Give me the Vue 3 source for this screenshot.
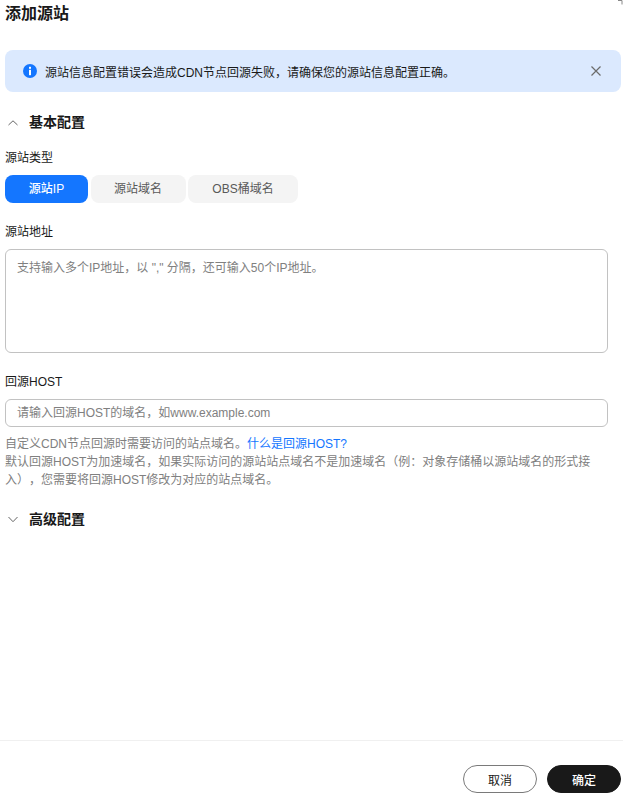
<script setup>
const types = [
  { label: '源站IP', cls: 'seg seg-ip active' },
  { label: '源站域名', cls: 'seg seg-domain' },
  { label: 'OBS桶域名', cls: 'seg seg-obs' },
]
</script>

<template>
  <div class="dialog">
    <svg class="corner" width="6" height="6" viewBox="0 0 6 6"><path d="M1 0.5 5 0.5 5 4.5" fill="none" stroke="#888" stroke-width="1"/></svg>
    <main class="body">
      <h1 class="title">添加源站</h1>
      <div class="alert">
        <svg class="info" width="14" height="14" viewBox="0 0 14 14">
          <circle cx="7" cy="7" r="7" fill="#1476ff"/>
          <rect x="6" y="2.8" width="2" height="2" fill="#fff"/>
          <rect x="6" y="5.8" width="2" height="5.4" fill="#fff"/>
        </svg>
        <span class="alert-text">源站信息配置错误会造成CDN节点回源失败，请确保您的源站信息配置正确。</span>
        <svg class="close" width="12" height="12" viewBox="0 0 12 12"><path d="M1.5 1.5 10.5 10.5M10.5 1.5 1.5 10.5" stroke="#6b6b6b" stroke-width="1.2" fill="none"/></svg>
      </div>

      <div class="section-head first">
        <svg class="chev" width="12" height="12" viewBox="0 0 12 12"><path d="M1.5 9 6 4.8 10.5 9" fill="none" stroke="#666" stroke-width="1"/></svg>
        <span>基本配置</span>
      </div>

      <div class="label l-type">源站类型</div>
      <div class="segs">
        <div v-for="t in types" :key="t.label" :class="t.cls">{{ t.label }}</div>
      </div>

      <div class="label l-addr">源站地址</div>
      <div class="textarea">支持输入多个IP地址，以 "," 分隔，还可输入50个IP地址。</div>

      <div class="label l-host">回源HOST</div>
      <div class="input">请输入回源HOST的域名，如www.example.com</div>
      <p class="help">自定义CDN节点回源时需要访问的站点域名。<a class="link">什么是回源HOST?</a><br>默认回源HOST为加速域名，如果实际访问的源站站点域名不是加速域名（例：对象存储桶以源站域名的形式接入），您需要将回源HOST修改为对应的站点域名。</p>

      <div class="section-head second">
        <svg class="chev" width="12" height="12" viewBox="0 0 12 12"><path d="M1.5 4 6 8.7 10.5 4" fill="none" stroke="#666" stroke-width="1"/></svg>
        <span>高级配置</span>
      </div>
    </main>
    <footer class="footer">
      <button class="btn cancel">取消</button>
      <button class="btn ok">确定</button>
    </footer>
  </div>
</template>

<style>
html, body { margin: 0; background: #fff; }
</style>

<style scoped>
.dialog {
  position: relative;
  width: 623px;
  height: 796px;
  display: flex;
  flex-direction: column;
  overflow: hidden;
  font-family: "Liberation Sans", "Noto Sans CJK SC", sans-serif;
  font-size: 12px;
  color: #191919;
  background: #fff;
  text-spacing-trim: space-all;
}
.corner { position: absolute; right: 0; top: 0; }
.body { flex: 1; padding: 0 15px 0 5px; min-height: 0; }
.title { margin: 0; font-size: 16px; font-weight: 700; line-height: 28px; height: 50px; color: #191919; }
.alert {
  box-sizing: border-box;
  width: 616px;
  height: 42px;
  background: #dbe9fe;
  border-radius: 8px;
  display: flex;
  align-items: center;
  padding: 0 19px 0 18px;
}
.info { flex: none; }
.alert-text { margin-left: 8px; flex: 1; color: #191919; }
.close { flex: none; }
.section-head {
  display: flex;
  align-items: center;
  gap: 10px;
  font-size: 14px;
  font-weight: 700;
  line-height: 20px;
  padding-left: 2px;
}
.section-head.first { margin-top: 20px; }
.section-head.second { margin-top: 20px; }
.label { line-height: 18px; color: #191919; }
.l-type { margin-top: 17px; }
.segs { display: flex; gap: 2.5px; margin-top: 8px; }
.seg {
  height: 28px;
  line-height: 28px;
  text-align: center;
  border-radius: 8px;
  background: #f4f4f4;
  color: #595959;
}
.seg-ip { width: 83px; }
.seg-domain { width: 95px; }
.seg-obs { width: 110px; }
.seg.active { background: #1476ff; color: #fff; font-weight: 500; }
.l-addr { margin-top: 20px; }
.textarea {
  box-sizing: border-box;
  width: 603px;
  height: 104px;
  margin-top: 8px;
  border: 1px solid #c2c2c2;
  border-radius: 6px;
  padding: 9px 11px;
  line-height: 18px;
  color: #808080;
}
.l-host { margin-top: 20px; }
.input {
  box-sizing: border-box;
  width: 603px;
  height: 28px;
  margin-top: 8px;
  border: 1px solid #c2c2c2;
  border-radius: 6px;
  padding: 0 11px;
  line-height: 26px;
  color: #808080;
}
.help { margin: 8px 0 0; width: 603px; line-height: 18px; color: #808080; }
.link { color: #1476ff; }
.footer {
  flex: none;
  box-sizing: border-box;
  height: 56px;
  border-top: 1px solid #f0f0f0;
  display: flex;
  justify-content: flex-end;
  align-items: flex-start;
  gap: 10px;
  padding: 24px 2px 0 0;
}
.btn {
  width: 74px;
  height: 28px;
  border-radius: 14px;
  font: inherit;
  padding: 0;
  cursor: pointer;
}
.cancel { background: #fff; border: 1px solid #7a7a7a; color: #191919; }
.ok { background: #191919; border: 1px solid #191919; color: #fff; font-weight: 500; }
</style>
